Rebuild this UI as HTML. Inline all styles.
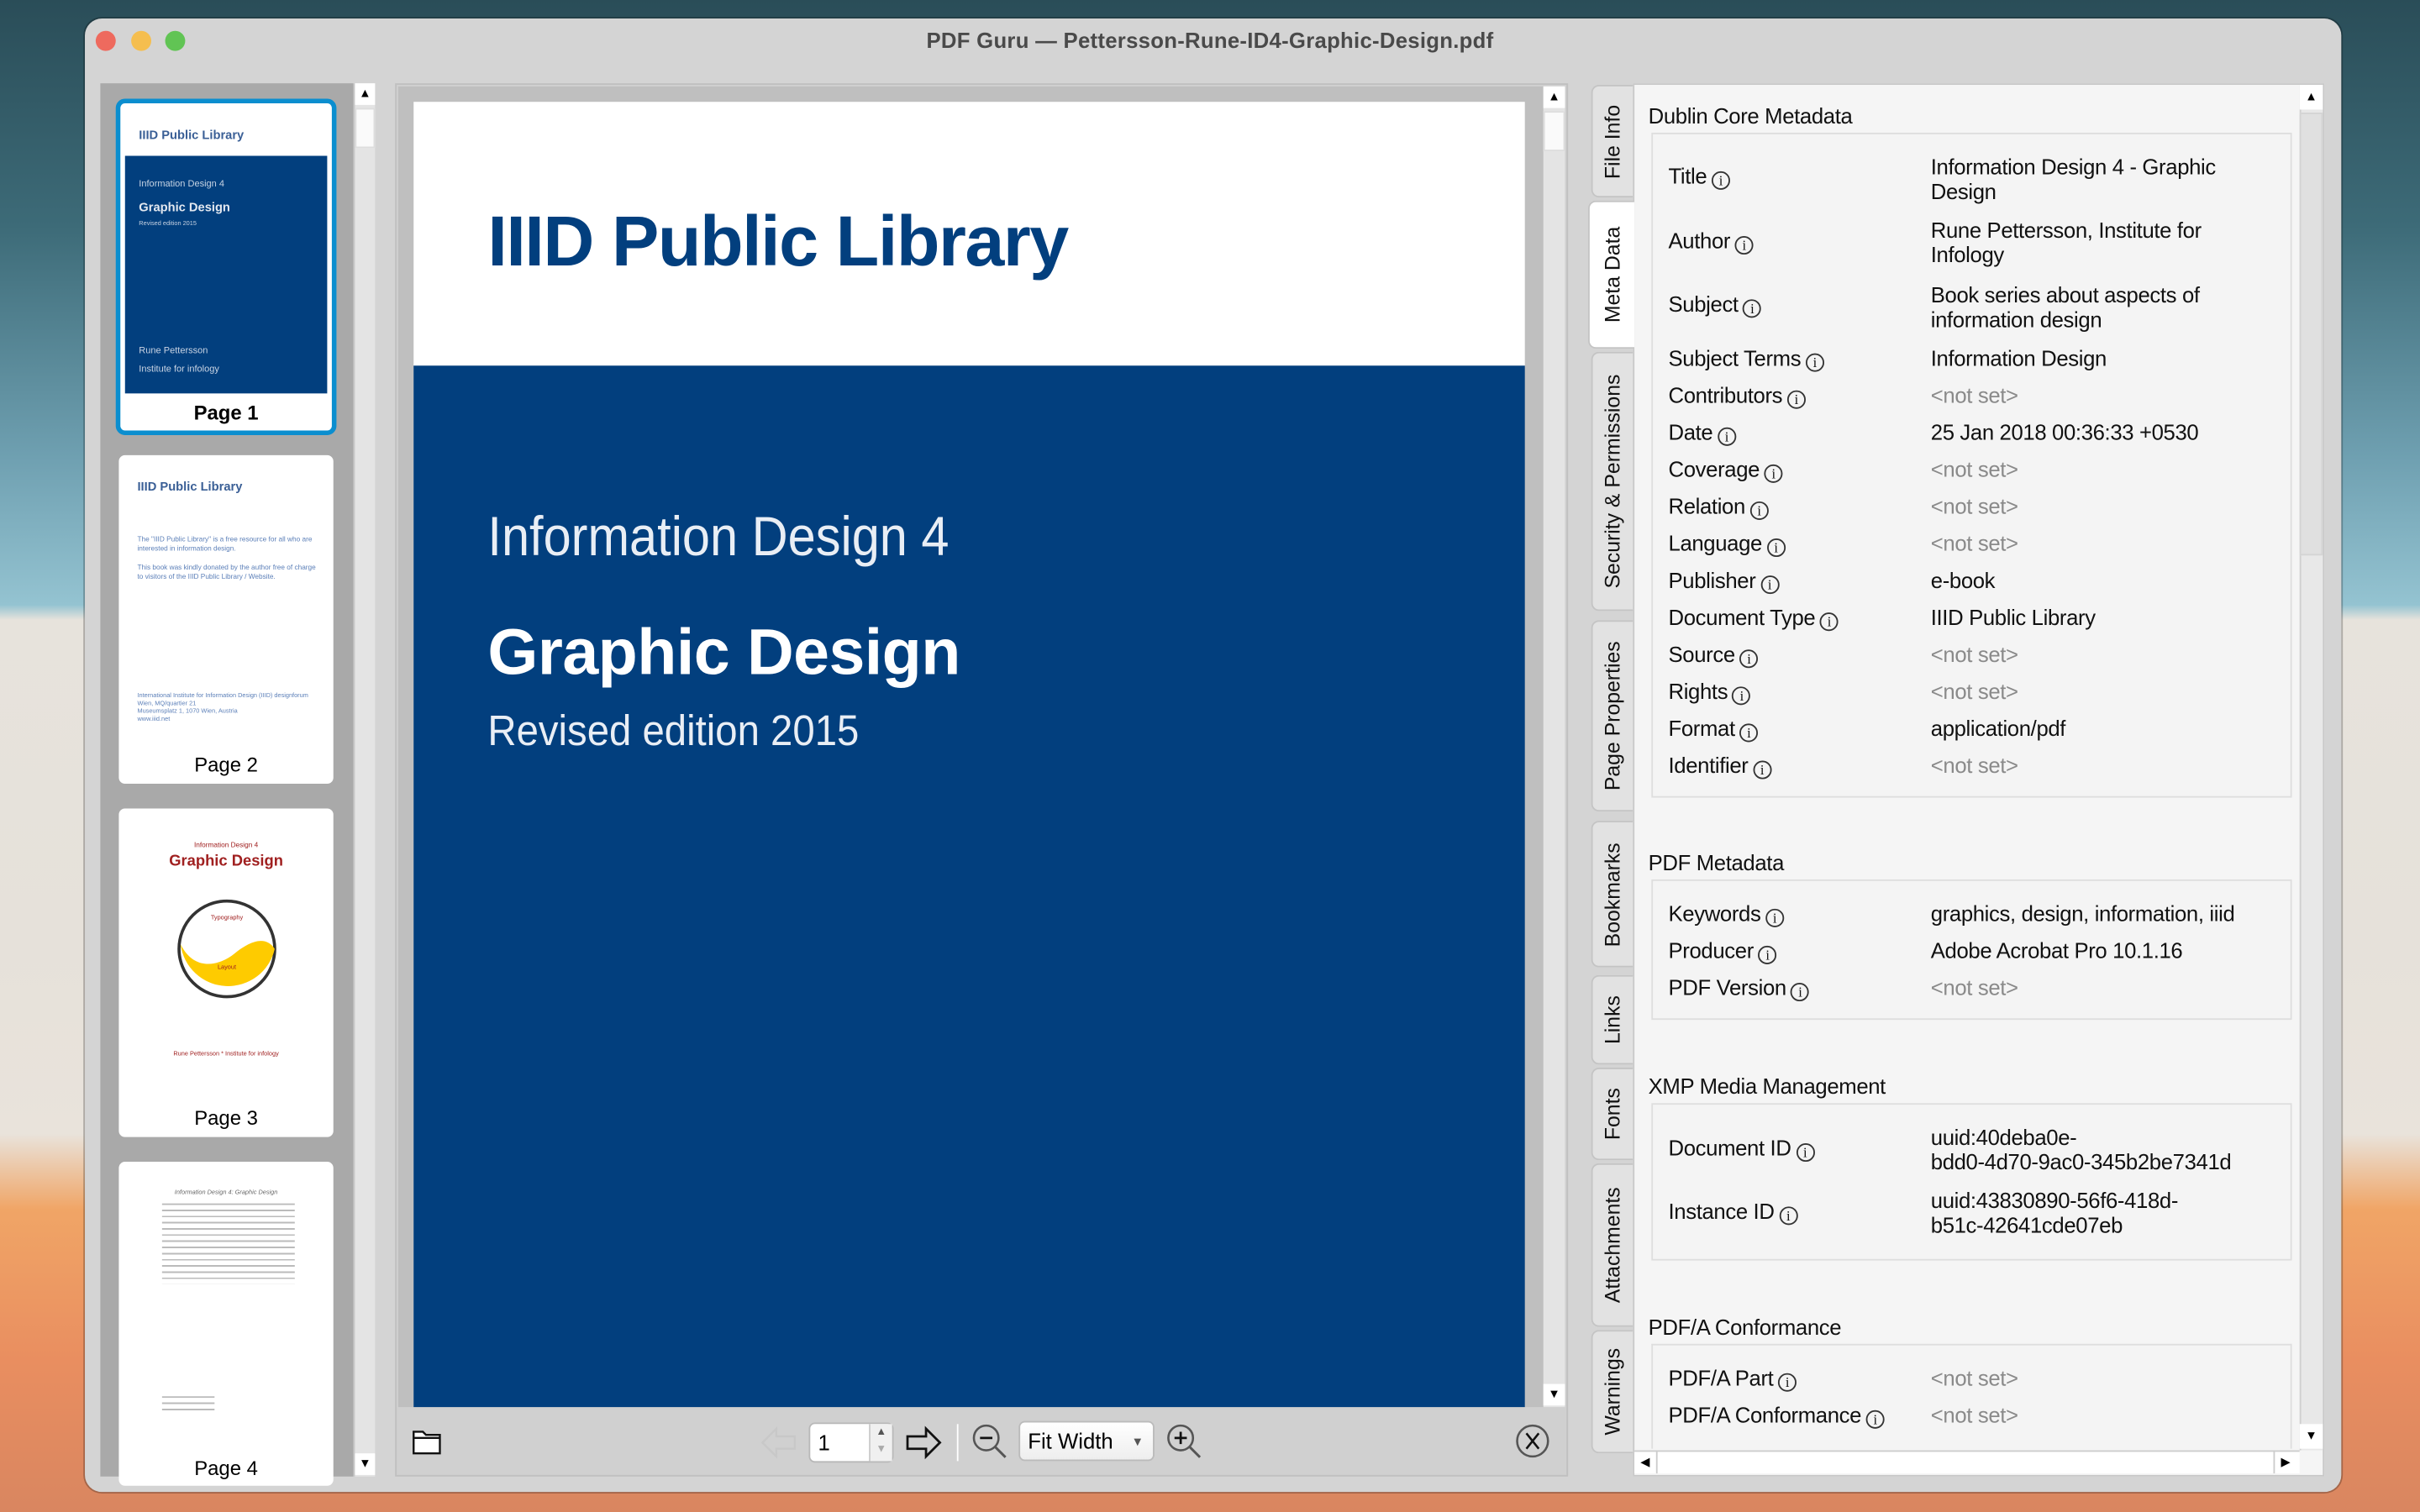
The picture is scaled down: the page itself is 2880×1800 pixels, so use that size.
<!DOCTYPE html>
<html><head><meta charset="utf-8"><style>
*{margin:0;padding:0;box-sizing:border-box}
html,body{width:2880px;height:1800px;overflow:hidden}
body{font-family:"Liberation Sans",sans-serif;position:relative;background:#2d5560}
#s{position:absolute;left:0;top:0;width:1568px;height:980px;transform:scale(1.836735);transform-origin:0 0;overflow:hidden}
.a{position:absolute}
.bg{position:absolute;left:0;top:0;width:1568px;height:980px;background:linear-gradient(180deg,#2a4d58 0%,#3d6b78 15%,#6e9fb0 30%,#94c3d1 40%,#e7e3dc 41%,#e6e1da 62%,#e9e3db 75%,#f0a566 80%,#e98e60 90%,#d98660 100%)}
.win{left:55px;top:12px;width:1462px;height:955px;background:#d4d4d4;border-radius:11px;box-shadow:0 0 0 1px rgba(0,0,0,.25)}
.dot{width:13px;height:13px;border-radius:50%;top:20px}
.title{left:0;width:1568px;top:18px;text-align:center;font-size:14px;font-weight:bold;color:#4a4a4a;letter-spacing:0.15px}
.thumb{left:77px;width:139px;background:#fff;border-radius:4px}
.pl{position:absolute;left:0;width:100%;text-align:center;font-size:13px;color:#000}
.lbl{position:absolute;left:1081px;font-size:14px;color:#111;line-height:16px;white-space:nowrap;letter-spacing:-0.2px}
.val{position:absolute;left:1251px;font-size:14px;color:#111;line-height:16px;white-space:nowrap;letter-spacing:-0.2px}
.ns{color:#8a8a8a}
.i{display:inline-block;width:12px;height:12px;border:1px solid #333;border-radius:50%;font-size:9px;line-height:10px;text-align:center;vertical-align:-1px;margin-left:3px;font-family:"Liberation Serif",serif}
.hd{position:absolute;left:1068px;font-size:14px;color:#111;letter-spacing:-0.2px}
.box{position:absolute;left:1070px;width:415px;border:1px solid #dedede;background:#f4f4f4}
.tab{position:absolute;left:1031px;width:27px;background:#e2e2e2;border:1px solid #c4c4c4;border-right:none;border-radius:5px 0 0 5px}
.tab span{position:absolute;left:50%;top:50%;transform:translate(-50%,-50%) rotate(-90deg);white-space:nowrap;font-size:13.5px;color:#111}
.ln{background:repeating-linear-gradient(180deg,#bbb 0,#bbb 1px,transparent 1px,transparent 4px)}
</style></head><body><div id="s">
<div class="bg"></div>
<div class="a win"></div>
<div class="a dot" style="left:62px;background:#ee6a5e"></div>
<div class="a dot" style="left:85px;background:#f5be4f"></div>
<div class="a dot" style="left:107px;background:#61c454"></div>
<div class="a title">PDF Guru — Pettersson-Rune-ID4-Graphic-Design.pdf</div>

<div class="a" style="left:65px;top:54px;width:164px;height:903px;background:#a9a9a9"></div>
<div class="a" style="left:229px;top:54px;width:14px;height:903px;background:#e4e4e4;border-left:1px solid #c8c8c8"></div>
<div class="a" style="left:230px;top:54px;width:13px;height:14px;background:#fff;font-size:8px;text-align:center;line-height:14px">▲</div>
<div class="a" style="left:230px;top:70px;width:13px;height:26px;background:#fafafa;border:1px solid #ddd"></div>
<div class="a" style="left:230px;top:942px;width:13px;height:14px;background:#fff;font-size:8px;text-align:center;line-height:14px">▼</div>

<div class="a thumb" style="left:75px;top:64px;width:143px;height:218px;border:3px solid #0b8ecf;border-radius:6px">
 <div class="a" style="left:12px;top:16px;font-size:8px;font-weight:bold;color:#3a5f96">IIID Public Library</div>
 <div class="a" style="left:3px;top:34px;width:131px;height:154px;background:#023f7e">
  <div class="a" style="left:9px;top:16px;font-size:6px;color:#c8d3e3">Information Design 4</div>
  <div class="a" style="left:9px;top:29px;font-size:8px;font-weight:bold;color:#e3e8f0">Graphic Design</div>
  <div class="a" style="left:9px;top:41px;font-size:4px;color:#c8d3e3">Revised edition 2015</div>
  <div class="a" style="left:9px;top:124px;font-size:6px;color:#c8d3e3">Rune Pettersson</div>
  <div class="a" style="left:9px;top:136px;font-size:6px;color:#c8d3e3">Institute for infology</div>
 </div>
 <div class="pl" style="top:193px;font-weight:bold">Page 1</div>
</div>
<div class="a thumb" style="top:295px;height:213px">
 <div class="a" style="left:12px;top:16px;font-size:8px;font-weight:bold;color:#3a5f96">IIID Public Library</div>
 <div class="a" style="left:12px;top:52px;width:118px;font-size:4.5px;line-height:6px;color:#5b7fb8">The "IIID Public Library" is a free resource for all who are interested in information design.<br><br>This book was kindly donated by the author free of charge to visitors of the IIID Public Library / Website.</div>
 <div class="a" style="left:12px;top:153px;width:118px;font-size:4px;line-height:5px;color:#5b7fb8">International Institute for Information Design (IIID) designforum Wien, MQ/quartier 21<br>Museumsplatz 1, 1070 Wien, Austria<br>www.iiid.net</div>
 <div class="pl" style="top:193px">Page 2</div>
</div>
<div class="a thumb" style="top:524px;height:213px">
 <div class="a" style="left:0;width:139px;top:21px;text-align:center;font-size:4.5px;color:#a02020">Information Design 4</div>
 <div class="a" style="left:0;width:139px;top:29px;text-align:center;font-size:10px;font-weight:bold;color:#a02020">Graphic Design</div>
 <svg class="a" style="left:37px;top:58px" width="66" height="66" viewBox="0 0 66 66"><circle cx="33" cy="33" r="31" fill="#fff" stroke="#333" stroke-width="2"/><path d="M3 30 C12 48 28 44 38 36 C48 28 58 24 64 33 A31 31 0 0 1 3 30Z" fill="#fecb00"/><text x="33" y="14" font-size="4" fill="#a02020" text-anchor="middle">Typography</text><text x="33" y="46" font-size="4" fill="#a02020" text-anchor="middle">Layout</text></svg>
 <div class="a" style="left:0;width:139px;top:156px;text-align:center;font-size:4px;color:#a02020">Rune Pettersson * Institute for infology</div>
 <div class="pl" style="top:193px">Page 3</div>
</div>
<div class="a thumb" style="top:753px;height:210px">
 <div class="a" style="left:0;width:139px;top:17px;text-align:center;font-size:4px;color:#666;font-style:italic">Information Design 4: Graphic Design</div>
 <div class="a ln" style="left:28px;top:27px;width:86px;height:52px"></div>
 <div class="a ln" style="left:28px;top:152px;width:34px;height:12px"></div>
 <div class="pl" style="top:191px">Page 4</div>
</div>

<div class="a" style="left:256px;top:54px;width:760px;height:903px;background:#d0d0d0;border:1px solid #c0c0c0"></div>
<div class="a" style="left:258px;top:56px;width:742px;height:856px;background:#bfbfbf"></div>
<div class="a" style="left:268px;top:66px;width:720px;height:171px;background:#fff">
 <div class="a" style="left:48px;top:63px;font-size:46px;font-weight:bold;color:#023f7e;letter-spacing:-0.8px">IIID Public Library</div>
</div>
<div class="a" style="left:268px;top:237px;width:720px;height:675px;background:#023f7e">
 <div class="a" style="left:48px;top:90px;font-size:36px;color:#e9eef5;transform:scaleX(.9);transform-origin:0 0">Information Design 4</div>
 <div class="a" style="left:48px;top:162px;font-size:42px;font-weight:bold;color:#fff;letter-spacing:-0.3px">Graphic Design</div>
 <div class="a" style="left:48px;top:221px;font-size:28px;color:#e9eef5;transform:scaleX(.92);transform-origin:0 0">Revised edition 2015</div>
</div>
<div class="a" style="left:1000px;top:56px;width:14px;height:856px;background:#e4e4e4"></div>
<div class="a" style="left:1000px;top:56px;width:14px;height:14px;background:#fff;font-size:8px;text-align:center;line-height:14px">▲</div>
<div class="a" style="left:1000px;top:72px;width:14px;height:26px;background:#fafafa;border:1px solid #ddd"></div>
<div class="a" style="left:1000px;top:897px;width:14px;height:14px;background:#fff;font-size:8px;text-align:center;line-height:14px">▼</div>
<svg class="a" style="left:266px;top:924px" width="22" height="20" viewBox="0 0 22 20"><path d="M2 4h6l2 2h9v12H2z" fill="#fff" stroke="#111" stroke-width="1.3"/><path d="M2 8h17" stroke="#111" stroke-width="1.3"/></svg>
<svg class="a" style="left:492px;top:924px" width="26" height="22" viewBox="0 0 26 22"><path d="M2 11l9-9v5h12v8H11v5z" fill="none" stroke="#c8c8c8" stroke-width="1.3"/></svg>
<div class="a" style="left:524px;top:922px;width:55px;height:26px;background:#fff;border:1px solid #b8b8b8;border-radius:4px;font-size:14px;line-height:24px;padding-left:5px">1</div>
<div class="a" style="left:563px;top:923px;width:15px;height:24px;background:#f0f0f0;border-left:1px solid #ccc;font-size:7px;line-height:11px;text-align:center;color:#555">▲<br><span style="color:#aaa">▼</span></div>
<svg class="a" style="left:585px;top:924px" width="26" height="22" viewBox="0 0 26 22"><path d="M24 11l-9-9v5H3v8h12v5z" fill="none" stroke="#111" stroke-width="1.5"/></svg>
<div class="a" style="left:620px;top:923px;width:1px;height:24px;background:#fff"></div>
<svg class="a" style="left:629px;top:922px" width="26" height="26" viewBox="0 0 26 26"><circle cx="10" cy="10" r="8" fill="none" stroke="#555" stroke-width="1.4"/><path d="M15.5 15.5l7 7" stroke="#555" stroke-width="1.6"/><path d="M6 10h8" stroke="#111" stroke-width="1.5"/></svg>
<div class="a" style="left:660px;top:921px;width:88px;height:26px;background:linear-gradient(#fff,#eee);border:1px solid #bbb;border-radius:4px;font-size:14px;line-height:25px;padding-left:5px">Fit Width<span style="position:absolute;right:6px;font-size:8px;color:#555">▼</span></div>
<svg class="a" style="left:755px;top:922px" width="26" height="26" viewBox="0 0 26 26"><circle cx="10" cy="10" r="8" fill="none" stroke="#555" stroke-width="1.4"/><path d="M15.5 15.5l7 7" stroke="#555" stroke-width="1.6"/><path d="M6 10h8M10 6v8" stroke="#111" stroke-width="1.5"/></svg>
<svg class="a" style="left:981px;top:922px" width="24" height="24" viewBox="0 0 24 24"><circle cx="12" cy="12" r="10" fill="none" stroke="#555" stroke-width="1.4"/><path d="M8 7l8 10M16 7l-8 10" stroke="#111" stroke-width="1.4"/></svg>

<div class="a" style="left:1058px;top:54px;width:448px;height:903px;background:#f5f5f5;border:1px solid #c8c8c8"></div>
<div class="tab" style="top:55px;height:73px"><span>File Info</span></div>
<div class="tab" style="top:130px;height:96px;background:#fff;left:1029px;width:30px"><span>Meta Data</span></div>
<div class="tab" style="top:228px;height:168px"><span>Security &amp; Permissions</span></div>
<div class="tab" style="top:402px;height:124px"><span>Page Properties</span></div>
<div class="tab" style="top:532px;height:95px"><span>Bookmarks</span></div>
<div class="tab" style="top:632px;height:58px"><span>Links</span></div>
<div class="tab" style="top:692px;height:60px"><span>Fonts</span></div>
<div class="tab" style="top:754px;height:106px"><span>Attachments</span></div>
<div class="tab" style="top:862px;height:80px"><span>Warnings</span></div>
<div class="a" style="left:1490px;top:55px;width:15px;height:885px;background:#e8e8e8;border-left:1px solid #d0d0d0"></div>
<div class="a" style="left:1490px;top:55px;width:15px;height:16px;background:#fff;font-size:8px;text-align:center;line-height:16px">▲</div>
<div class="a" style="left:1490px;top:73px;width:15px;height:287px;background:#e0e0e0;border:1px solid #d4d4d4"></div>
<div class="a" style="left:1490px;top:923px;width:15px;height:16px;background:#fff;font-size:8px;text-align:center;line-height:16px">▼</div>
<div class="a" style="left:1059px;top:940px;width:431px;height:15px;background:#fff;border-top:1px solid #ccc"></div>
<div class="a" style="left:1059px;top:940px;width:15px;height:15px;font-size:8px;text-align:center;line-height:15px;border-right:1px solid #ccc">◀</div>
<div class="a" style="left:1473px;top:940px;width:15px;height:15px;font-size:8px;text-align:center;line-height:15px;border-left:1px solid #ccc">▶</div>

<div class="hd" style="top:67px">Dublin Core Metadata</div>
<div class="box" style="top:86px;height:431px"></div>
<div class="lbl" style="top:106px">Title<span class="i">i</span></div><div class="val" style="top:100px">Information Design 4 - Graphic<br>Design</div>
<div class="lbl" style="top:148px">Author<span class="i">i</span></div><div class="val" style="top:141px">Rune Pettersson, Institute for<br>Infology</div>
<div class="lbl" style="top:189px">Subject<span class="i">i</span></div><div class="val" style="top:183px">Book series about aspects of<br>information design</div>
<div class="lbl" style="top:224px">Subject Terms<span class="i">i</span></div><div class="val" style="top:224px">Information Design</div>
<div class="lbl" style="top:248px">Contributors<span class="i">i</span></div><div class="val ns" style="top:248px">&lt;not set&gt;</div>
<div class="lbl" style="top:272px">Date<span class="i">i</span></div><div class="val" style="top:272px">25 Jan 2018 00:36:33 +0530</div>
<div class="lbl" style="top:296px">Coverage<span class="i">i</span></div><div class="val ns" style="top:296px">&lt;not set&gt;</div>
<div class="lbl" style="top:320px">Relation<span class="i">i</span></div><div class="val ns" style="top:320px">&lt;not set&gt;</div>
<div class="lbl" style="top:344px">Language<span class="i">i</span></div><div class="val ns" style="top:344px">&lt;not set&gt;</div>
<div class="lbl" style="top:368px">Publisher<span class="i">i</span></div><div class="val" style="top:368px">e-book</div>
<div class="lbl" style="top:392px">Document Type<span class="i">i</span></div><div class="val" style="top:392px">IIID Public Library</div>
<div class="lbl" style="top:416px">Source<span class="i">i</span></div><div class="val ns" style="top:416px">&lt;not set&gt;</div>
<div class="lbl" style="top:440px">Rights<span class="i">i</span></div><div class="val ns" style="top:440px">&lt;not set&gt;</div>
<div class="lbl" style="top:464px">Format<span class="i">i</span></div><div class="val" style="top:464px">application/pdf</div>
<div class="lbl" style="top:488px">Identifier<span class="i">i</span></div><div class="val ns" style="top:488px">&lt;not set&gt;</div>

<div class="hd" style="top:551px">PDF Metadata</div>
<div class="box" style="top:570px;height:91px"></div>
<div class="lbl" style="top:584px">Keywords<span class="i">i</span></div><div class="val" style="top:584px">graphics, design, information, iiid</div>
<div class="lbl" style="top:608px">Producer<span class="i">i</span></div><div class="val" style="top:608px">Adobe Acrobat Pro 10.1.16</div>
<div class="lbl" style="top:632px">PDF Version<span class="i">i</span></div><div class="val ns" style="top:632px">&lt;not set&gt;</div>

<div class="hd" style="top:696px">XMP Media Management</div>
<div class="box" style="top:715px;height:102px"></div>
<div class="lbl" style="top:736px">Document ID<span class="i">i</span></div><div class="val" style="top:729px">uuid:40deba0e-<br>bdd0-4d70-9ac0-345b2be7341d</div>
<div class="lbl" style="top:777px">Instance ID<span class="i">i</span></div><div class="val" style="top:770px">uuid:43830890-56f6-418d-<br>b51c-42641cde07eb</div>

<div class="hd" style="top:852px">PDF/A Conformance</div>
<div class="box" style="top:871px;height:68px;border-bottom:none"></div>
<div class="lbl" style="top:885px">PDF/A Part<span class="i">i</span></div><div class="val ns" style="top:885px">&lt;not set&gt;</div>
<div class="lbl" style="top:909px">PDF/A Conformance<span class="i">i</span></div><div class="val ns" style="top:909px">&lt;not set&gt;</div>
</div></body></html>
